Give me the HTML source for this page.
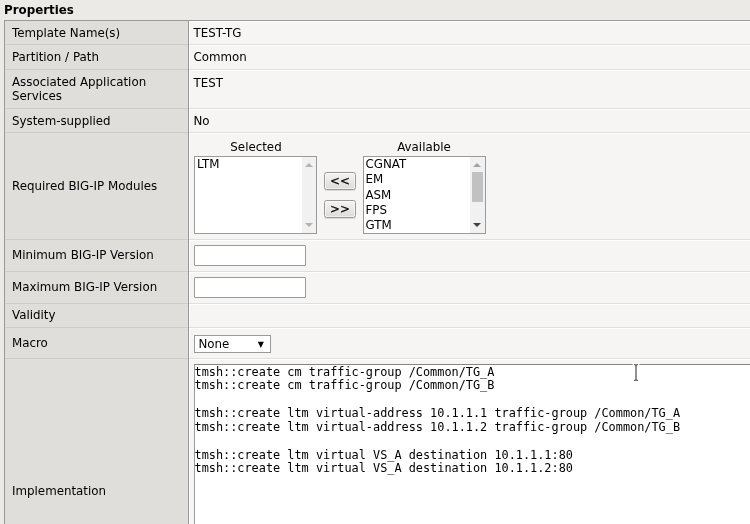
<!DOCTYPE html>
<html><head><meta charset="utf-8">
<style>
html,body{margin:0;padding:0;}
body{width:750px;height:524px;overflow:hidden;background:#ebeae6;font-family:"DejaVu Sans","Liberation Sans",sans-serif;font-size:11.85px;color:#000;position:relative;}
#title{will-change:transform;position:absolute;left:4px;top:3px;font-weight:bold;font-size:11.85px;line-height:15px;color:#000;}
#tbl{will-change:transform;position:absolute;left:4px;top:20px;width:760px;border-left:1px solid #999;border-top:1px solid #999;}
.row{display:flex;border-bottom:1px solid #e0dfdd;background:#f6f5f3;}
.lbl{box-shadow:0 1px 0 #cdccc9;box-sizing:content-box;width:171px;padding:0 5px 0 7px;background:#dfdedb;border-right:1px solid #999;display:flex;align-items:center;line-height:14px;}
.val{flex:1;padding-left:4.5px;box-shadow:inset 1px 1px 0 #fff;display:flex;align-items:center;}
.top .lbl,.top .val{align-items:flex-start;}
input.t{width:110px;height:19px;border-radius:1px;border:1px solid #9a9a9a;background:#fff;padding:0;margin:0;}
.lb{position:absolute;border:1px solid #9a9a9a;background:#fff;overflow:hidden}
.sb{position:absolute;right:0;top:0;width:14px;height:100%;background:#f1f1f1}
.sb i{position:absolute;left:3px;width:0;height:0;border:4px solid transparent;}
.sb i.up{top:6px;border-top-width:0;border-bottom:4px solid #aaa}
.sb i.dn{bottom:6px;border-bottom-width:0;border-top:4px solid #aaa}
.btn{position:absolute;width:30px;height:16px;border:1px solid #9a9a9a;border-radius:2.5px;background:linear-gradient(#f5f4f3,#dddcda);text-align:center;line-height:16.5px;box-shadow:0 1px 0 #dcdad8, inset 0 0 0 1px rgba(255,255,255,.55);-webkit-text-stroke:0.15px #000}
#tbl::after{content:"";position:absolute;left:183px;top:0;width:1px;height:600px;background:#999}
</style></head><body>
<div id="title">Properties</div>
<div id="tbl">
 <div class="row" style="height:23px"><div class="lbl">Template Name(s)</div><div class="val">TEST-TG</div></div>
 <div class="row" style="height:24px"><div class="lbl">Partition / Path</div><div class="val">Common</div></div>
 <div class="row top" style="height:38px"><div class="lbl"><span style="padding-top:5px">Associated Application Services</span></div><div class="val"><span style="padding-top:6px">TEST</span></div></div>
 <div class="row" style="height:23px"><div class="lbl">System-supplied</div><div class="val">No</div></div>
 <div class="row" style="height:106px"><div class="lbl">Required BIG-IP Modules</div><div class="val" style="position:relative">
   <div style="position:absolute;left:5px;top:7px;width:124px;text-align:center;line-height:14px">Selected</div>
   <div class="lb" style="left:5px;top:23px;width:121px;height:76px;">
     <div style="position:absolute;left:2px;top:0;line-height:15px">LTM</div>
     <div class="sb"><i class="up" style="border-bottom-color:#b4b4b4"></i><i class="dn" style="border-top-color:#b4b4b4"></i></div>
   </div>
   <div style="position:absolute;left:173px;top:7px;width:124px;text-align:center;line-height:14px">Available</div>
   <div class="lb" style="left:174px;top:23px;width:121px;height:76px;">
     <div style="position:absolute;left:1.5px;top:0;line-height:15.25px">CGNAT<br>EM<br>ASM<br>FPS<br>GTM</div>
     <div class="sb" style="width:15px"><i class="up" style="border-bottom-color:#a3a3a3"></i><i class="dn" style="border-top-color:#404040"></i>
       <div style="position:absolute;left:2px;top:15px;width:11px;height:30px;background:#c1c1c1"></div></div>
   </div>
   <div class="btn" style="left:135px;top:39px;">&lt;&lt;</div>
   <div class="btn" style="left:135px;top:67px;">&gt;&gt;</div>
 </div></div>
 <div class="row" style="height:31px"><div class="lbl" style="padding-bottom:2px">Minimum BIG-IP Version</div><div class="val"><input class="t"></div></div>
 <div class="row" style="height:31px"><div class="lbl" style="padding-bottom:2px">Maximum BIG-IP Version</div><div class="val"><input class="t"></div></div>
 <div class="row" style="height:23px"><div class="lbl" style="padding-bottom:2px">Validity</div><div class="val"></div></div>
 <div class="row" style="height:30px"><div class="lbl">Macro</div><div class="val"><div style="width:75px;height:16px;margin-top:2px;border:1px solid #9a9a9a;background:#fff;position:relative;line-height:17px"><span style="padding-left:4px">None</span><span style="position:absolute;right:5.5px;top:-0.5px;font-size:8px">&#9660;</span></div></div></div>
 <div class="row" style="height:263px"><div class="lbl">Implementation</div><div class="val" style="position:relative">
   <div style="position:absolute;left:5px;top:5px;width:600px;height:300px;border:1px solid #9a9a9a;border-top-color:#858585;background:#fff;font-family:'DejaVu Sans Mono','Liberation Mono',monospace;font-size:11.87px;line-height:13.83px;white-space:pre;padding:0;"><div style="position:relative;top:0.6px;left:-0.5px">tmsh::create cm traffic-group /Common/TG_A
tmsh::create cm traffic-group /Common/TG_B

tmsh::create ltm virtual-address 10.1.1.1 traffic-group /Common/TG_A
tmsh::create ltm virtual-address 10.1.1.2 traffic-group /Common/TG_B

tmsh::create ltm virtual VS_A destination 10.1.1.1:80
tmsh::create ltm virtual VS_A destination 10.1.1.2:80</div></div>
 </div></div>
</div>
<svg style="position:absolute;left:631px;top:362px" width="10" height="21" viewBox="0 0 10 21"><g fill="none" stroke="#fff" stroke-width="3" stroke-linecap="round" opacity="0.9"><path d="M3 2.5Q4.5 2.5 5 3.5Q5.5 2.5 7 2.5M5 3.500V17.500M3 18.5Q4.5 18.5 5 17.5Q5.5 18.5 7 18.5"/></g><g fill="none" stroke="#4a4a4a" stroke-width="1.200"><path d="M3 2.5Q4.5 2.5 5 3.5Q5.5 2.5 7 2.5M5 3.500V17.500M3 18.5Q4.5 18.5 5 17.5Q5.5 18.5 7 18.5"/></g></svg>
</body></html>
